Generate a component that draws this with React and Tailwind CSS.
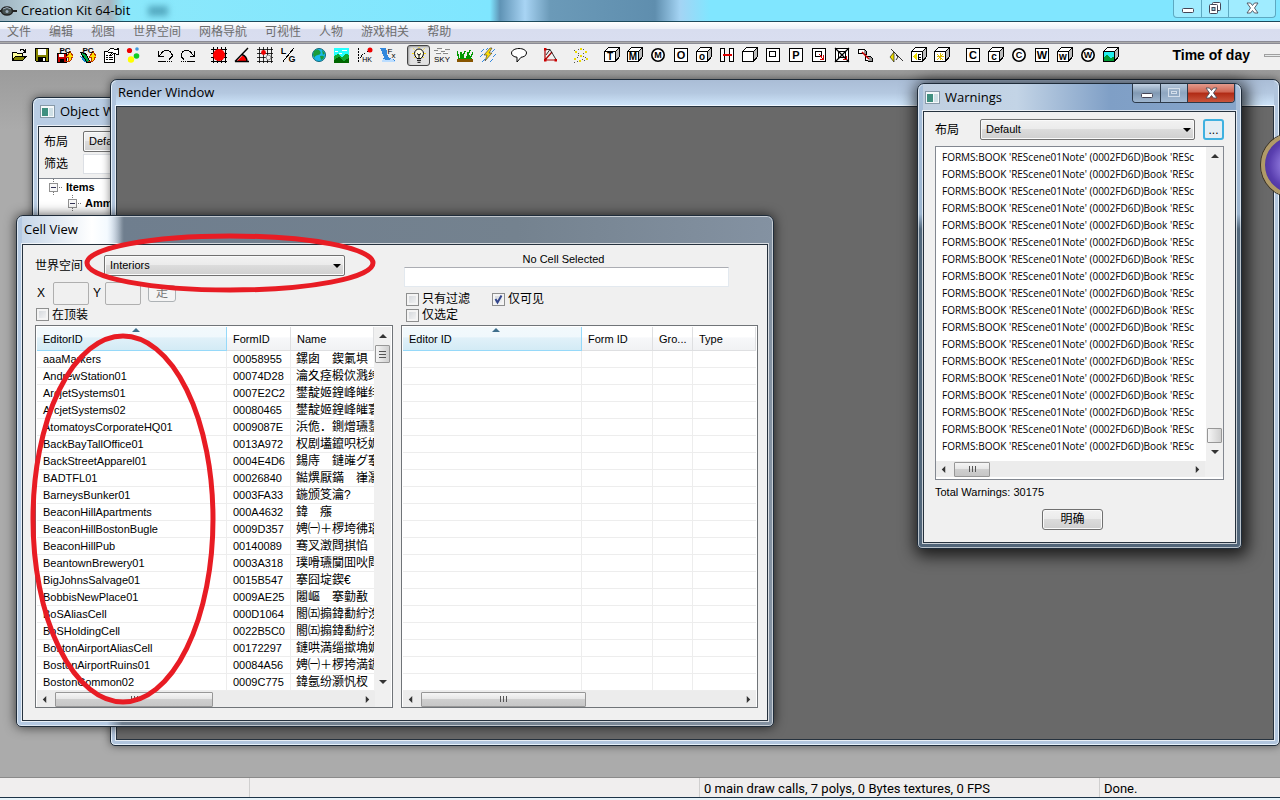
import { useState } from "react";

const MENUS = ["文件", "编辑", "视图", "世界空间", "网格导航", "可视性", "人物", "游戏相关", "帮助"];

const CELLS = [
  ["aaaMarkers", "00058955", "鏍囱　鍥氭埧"],
  ["AndrewStation01", "00074D28", "瀹夊痉椴佽溅绔"],
  ["ArcjetSystems01", "0007E2C2", "鐢靛姬鍠峰皠绯"],
  ["ArcjetSystems02", "00080465", "鐢靛姬鍠峰皠寰"],
  ["AtomatoysCorporateHQ01", "0009087E", "浜佹．鍘熷瓙鐜"],
  ["BackBayTallOffice01", "0013A972", "权剧壒鑹呮柉娓"],
  ["BackStreetApparel01", "0004E4D6", "鍚庤　鏈嶉グ搴"],
  ["BADTFL01", "00026840", "鐑熼厭鏋　嵂灏"],
  ["BarneysBunker01", "0003FA33", "鍦颁笅瀹?"],
  ["BeaconHillApartments", "000A4632", "鍏　瘬"],
  ["BeaconHillBostonBugle", "0009D357", "娉㈠＋椤垮彿瑙"],
  ["BeaconHillPub", "00140089", "骞叉澂閰掑惂"],
  ["BeantownBrewery01", "0003A318", "璞嗗瓙闃囬吙閰"],
  ["BigJohnsSalvage01", "0015B547", "搴囧埞鍥€"],
  ["BobbisNewPlace01", "0009AE25", "闂嶇　搴勭敾"],
  ["BoSAliasCell", "000D1064", "閽㈤搧鍏勫紵浼"],
  ["BoSHoldingCell", "0022B5C0", "閽㈤搧鍏勫紵浼"],
  ["BostonAirportAliasCell", "00172297", "鏈哄満缁撳埆娓"],
  ["BostonAirportRuins01", "00084A56", "娉㈠＋椤挎満鍦"],
  ["BostonCommon02", "0009C775", "鍏氬纷灏忛杈"],
];

const WARNINGS = Array.from({ length: 18 }, () => "FORMS:BOOK 'REScene01Note' (0002FD6D)Book 'RESc");

/* ---------- toolbar icons ---------- */

function Letter({ x, y, size = 10, children, bold = true }) {
  return (
    <text x={x} y={y} fontSize={size} fontWeight={bold ? 700 : 400} textAnchor="middle" fontFamily="Liberation Sans, sans-serif" fill="#000">
      {children}
    </text>
  );
}

function Cube({ letter, children }) {
  return (
    <>
      <path d="M.5 4.5l4-4h11v9l-4 5" fill="#fff" stroke="#000" />
      <path d="M11.5 4.5l4-4v9l-4 5z" fill="#bbb" stroke="#000" />
      <rect x=".5" y="4.5" width="11" height="10" fill="#fff" stroke="#000" />
      {letter && <Letter x={6} y={13} size={10}>{letter}</Letter>}
      {children}
    </>
  );
}

function Box({ letter, children }) {
  return (
    <>
      <rect x="1.5" y="1.5" width="13" height="13" fill="#fff" stroke="#000" />
      {letter && <Letter x={8} y={12} size={11}>{letter}</Letter>}
      {children}
    </>
  );
}

function Round({ letter, bold }) {
  return (
    <>
      <circle cx="8" cy="8" r="6.200" fill="#fff" stroke="#000" strokeWidth="1.600" shapeRendering="auto" />
      <Letter x={8} y={11} size={9} bold={bold}>{letter}</Letter>
    </>
  );
}

const ICONS = {
  open: (
    <>
      <path d="M1.5 13.5v-8h4l1 1h5v3" fill="#ffff9c" stroke="#000" />
      <path d="M1.5 13.5l3-4.500h11l-4 4.500z" fill="#848400" stroke="#000" />
      <path d="M9 3.500q2-2 4 0l1 1M14.500 2v3h-3" fill="none" stroke="#000" />
    </>
  ),
  save: (
    <>
      <path d="M1.500 1.500h13v13h-12l-1-1z" fill="#848400" stroke="#000" />
      <rect x="4" y="2" width="8" height="6" fill="#fff" />
      <rect x="4" y="10" width="8" height="5" fill="#000" />
      <rect x="9" y="11" width="2" height="3" fill="#fff" />
    </>
  ),
  pcSave: (
    <>
      <rect x=".5" y="6.500" width="9" height="9" fill="#c00" stroke="#000" />
      <rect x="2" y="7" width="5" height="3" fill="#fff" />
      <rect x="3" y="12" width="4" height="3" fill="#000" />
      <path d="M8 15c4 0 4-2 4-5H9.500L13 4l3.500 6H15c0 4-2 5-7 5z" fill="#fd0" stroke="#b30" />
      <Letter x={8} y={6} size={8}>PC</Letter>
    </>
  ),
  pcLand: (
    <>
      <path d="M.5 5.500l5 1 5 9H7z" fill="#0a4" stroke="#000" />
      <path d="M0 9l4 2 2 4H4z" fill="#18c" />
      <path d="M8 15c4 0 4-2 4-5H9.500L13 4l3.500 6H15c0 4-2 5-7 5z" fill="#fd0" stroke="#b30" />
      <Letter x={8} y={6} size={8}>PC</Letter>
    </>
  ),
  props: (
    <>
      <rect x="1.500" y="4.500" width="10" height="11" fill="#fff" stroke="#000" />
      <path d="M3 8.500h2M6 8.500h3M3 10.500h2M6 10.500h4M3 12.500h2M6 12.500h4" stroke="#000" />
      <path d="M4.500 4.500l3-3h3l1 1h3v-1h1v6h-2l-1-1h-2l-2 2-1-1 2-2H6z" fill="#fff" stroke="#000" />
    </>
  ),
  balls: (
    <g shapeRendering="auto">
      <circle cx="3.500" cy="3.500" r="2.600" fill="#e00" />
      <circle cx="11" cy="2" r="1.800" fill="#49d" />
      <circle cx="10.500" cy="9" r="2.800" fill="#1c2" />
      <circle cx="5" cy="12.500" r="3.200" fill="#ff0" />
    </g>
  ),
  undo: (
    <>
      <path d="M1.500 4v5h5M2 9l4-4.500q1-1 3-1h2q3 1 4 4v2l-3 3" fill="none" stroke="#000" />
      <path d="M1 14.500h8M10 14.500h1M12 14.500h1M14 14.500h1" stroke="#000" />
    </>
  ),
  redo: (
    <>
      <path d="M14.500 4v5h-5M14 9l-4-4.500q-1-1-3-1H5q-3 1-4 4v2l3 3" fill="none" stroke="#000" />
      <path d="M15 14.500H7M6 14.500H5M4 14.500H3M2 14.500H1" stroke="#000" />
    </>
  ),
  snapGrid: (
    <>
      <path d="M2.500 0v16M6.500 0v16M10.500 0v16M14.500 0v16M0 2.500h16M0 6.500h16M0 10.500h16M0 14.500h16" stroke="#000" />
      <circle cx="8" cy="8" r="6" fill="#f00" shapeRendering="auto" />
    </>
  ),
  angle: (
    <g shapeRendering="auto">
      <path d="M3 14l6-6q4 2 4 6z" fill="#f00" />
      <path d="M1 14.500h14M1 14.500L14 1M8 7.500q5 2 5 7" fill="none" stroke="#000" strokeWidth="1.400" />
    </g>
  ),
  gridRef: (
    <>
      <path d="M2.500 0v16M6.500 0v16M10.500 0v16M14.500 0v16M0 2.500h16M0 6.500h16M0 10.500h16M0 14.500h16" stroke="#000" strokeWidth=".8" />
      <circle cx="6.500" cy="5.500" r="2.400" fill="#e00" shapeRendering="auto" />
      <circle cx="11.500" cy="10.500" r="2.400" fill="#eee" stroke="#888" shapeRendering="auto" />
    </>
  ),
  lg: (
    <>
      <Letter x={3.500} y={7} size={9}>L</Letter>
      <Letter x={12} y={15} size={9}>G</Letter>
      <path d="M3 14.500L14 1" stroke="#000" />
    </>
  ),
  globe: (
    <g shapeRendering="auto">
      <circle cx="8" cy="8" r="6.500" fill="#18b8e8" stroke="#167" />
      <path d="M3 4q4-3 6 0t-2 4-3 3-2-3zM9 9q4-1 4 1t-3 3zM11 3l3 3-2 2z" fill="#1a9c3a" />
    </g>
  ),
  land: (
    <>
      <rect x="0" y="1" width="15" height="15" fill="#2ff" />
      <path d="M1 4h3M8 3h5M5 6h3" stroke="#fff" />
      <path d="M0 9l4-2 4 3 4-3 3 1v8H0z" fill="#1a3" />
      <path d="M0 13l5-3 5 4 5-3v5H0z" fill="#060" />
    </>
  ),
  hk: (
    <>
      <path d="M1.500 1v14" fill="none" stroke="#000" strokeDasharray="2 1" />
      <path d="M3 11l3-4 5-3" fill="none" stroke="#000" strokeDasharray="1 1" />
      <circle cx="13" cy="3" r="2.500" fill="#e00" shapeRendering="auto" />
      <Letter x={10} y={15} size={7} bold={false}>HK</Letter>
    </>
  ),
  fx: (
    <>
      <path d="M0 1h6l2 9 7 3v2H2l2-5z" fill="#38d" />
      <path d="M3 12l4 1 5-1 3 2v1H2z" fill="#bdf" />
      <Letter x={10} y={7} size={8} bold={false}>F</Letter>
      <Letter x={13.500} y={11} size={8} bold={false}>x</Letter>
    </>
  ),
  bulb: (
    <g shapeRendering="auto">
      <path d="M8 0v1M1 6.500h2M13 6.500h2M2.500 1.500l1 1M13.500 1.500l-1 1M3 11l1-1M13 11l-1-1" stroke="#fd0" />
      <path d="M6 11.500Q3.500 9 3.500 6.500a4.500 4.500 0 0 1 9 0Q12.500 9 10 11.500z" fill="#fffde8" stroke="#000" />
      <path d="M6 6.500l2 1.500 2-1.500M8 8v3M6 13.300h4M6.500 15.300h3" fill="none" stroke="#000" />
    </g>
  ),
  sky: (
    <>
      <path d="M0 3.500h4M3 1.500h5M7 4.500h4M11 2.500h5M2 6.500h5M9 6.500h5" stroke="#888" />
      <path d="M2 5.500h4M8 2.500h3M10 5.500h4" stroke="#fff" />
      <Letter x={8} y={15} size={8} bold={false}>SKY</Letter>
    </>
  ),
  grass: (
    <>
      <path d="M0 12h16v3H0z" fill="#850" />
      <path d="M2 12L0 4M4 12V6M5 12l3-8M7 12l-3-7M9 12l4-9M11 12V5M13 12l3-7M14 12l-3-5" stroke="#090" strokeWidth="1.400" />
    </>
  ),
  rain: (
    <g shapeRendering="auto">
      <path d="M1 5l3-3M0 10l3-3M2 15l3-3M12 5l3-3M13 10l3-3M10 15l3-3M6 3l2-2" stroke="#38d" />
      <path d="M10 1L4 8h3l-2 6 7-8H9l3-5z" fill="#fd0" stroke="#333" strokeWidth=".6" />
    </g>
  ),
  bubble: (
    <path d="M8 1.500c4 0 7.500 1.800 7.500 4.500S12.500 10 10 10.300L6 15v-4.800C3 10 .5 8.500 .5 6S4 1.500 8 1.500z" fill="#fff" stroke="#000" shapeRendering="auto" />
  ),
  navmesh: (
    <g shapeRendering="auto">
      <path d="M3 2v11h11M3 13l7-8" fill="none" stroke="#a00" strokeWidth="1.200" />
      <path d="M3 2.500h5l6 10M8 2.500L4 8" fill="none" stroke="#000" strokeWidth=".8" />
      <path d="M2 1h2.500v2.500H2zM2 12h2.500v2.500H2zM12.500 12H15v2.500h-2.500z" fill="#c00" />
    </g>
  ),
  stars: (
    <>
      <path d="M7 1h2v2H7zM2 4h2v2H2zM12 4h2v2h-2zM7 8h2v2H7zM1 11h2v2H1zM13 11h2v2h-2zM6 13h2v2H6z" fill="#ed0" />
      <path d="M5 2.500h1M10 2.500h1M1 3.500h1M5 6.500h1M10 6.500h1M5 8.500h1M10 9.500h1M4 10.500h1M4 14.500h1M11 13.500h1M12 10.500h1M1 15.500h1M9 12.500h1" stroke="#555" />
    </>
  ),
  cubeT: <Cube letter="T" />,
  cubeM: <Cube letter="M" />,
  roundM: <Round letter="M" bold />,
  boxO: <Box letter="O" />,
  cubeO: <Cube letter="o" />,
  portal: (
    <>
      <rect x="1.500" y="1.500" width="4" height="13" fill="#fff" stroke="#000" />
      <rect x="10.500" y="1.500" width="4" height="13" fill="#fff" stroke="#000" />
      <path d="M4 8h9" stroke="#d00" strokeWidth="2" />
    </>
  ),
  cube: <Cube />,
  boxInner: <Box><rect x="4.500" y="4.500" width="6" height="5" fill="#fff" stroke="#000" /></Box>,
  boxP: <Box letter="P" />,
  boxArrow: (
    <Box>
      <rect x="4.500" y="4.500" width="6" height="5" fill="#fff" stroke="#000" />
      <path d="M8 7l4 5M12.500 8v4.500H9" fill="none" stroke="#c00" />
    </Box>
  ),
  boxCross: (
    <Box>
      <rect x="4.500" y="4.500" width="7" height="6" fill="none" stroke="#000" />
      <path d="M1 1l14 14M15 1L1 15" stroke="#000" strokeWidth="1.300" shapeRendering="auto" />
      <path d="M9 12.500h3.500V9" fill="none" stroke="#c00" />
    </Box>
  ),
  link: (
    <>
      <path d="M1.500 2.500h6v4h-6zM8.500 9.500h5v4h-5z" fill="#fff" stroke="#000" />
      <path d="M7 2l2 2v3H7M13 9l2 2v3h-4" fill="#999" stroke="#000" />
      <path d="M5 5l7 7" stroke="#c00" strokeWidth="1.500" shapeRendering="auto" />
    </>
  ),
  soundLine: (
    <g shapeRendering="auto">
      <path d="M3 2l12 12" stroke="#000" strokeWidth=".8" />
      <path d="M6 5v10L2 10z" fill="#ed0" stroke="#000" strokeWidth=".6" />
      <path d="M8 8l2 2-2 3" fill="none" stroke="#000" strokeWidth=".8" />
    </g>
  ),
  cubeSound: <Cube><path d="M6 5v9L2 9.500z" fill="#ed0" /><path d="M7 7.500h3M7 10.500h3M7 12.500h3M7.500 7v6" stroke="#000" /></Cube>,
  cubeStar: <Cube><path d="M3 7l6 6M9 7l-6 6M6 6v7M2.500 9.500h7" stroke="#db0" /></Cube>,
  boxC: <Box letter="C" />,
  cubeC: <Cube letter="c" />,
  roundC: <Round letter="C" />,
  boxW: <Box letter="W" />,
  cubeW: <Cube letter="w" />,
  roundW: <Round letter="W" bold />,
  cubeLand: <Cube><rect x="1" y="5" width="10" height="9" fill="#2ee" /><path d="M1 10l3-2 3 3 4-1v4H1z" fill="#093" /></Cube>,
};

const TOOL_GROUPS = [
  ["open", "save", "pcSave", "pcLand", "props", "balls"],
  ["undo", "redo"],
  ["snapGrid", "angle", "gridRef", "lg"],
  ["globe", "land", "hk", "fx"],
  ["bulb", "sky", "grass", "rain"],
  ["bubble"],
  ["navmesh"],
  ["stars"],
  ["cubeT", "cubeM", "roundM", "boxO", "cubeO", "portal", "cube", "boxInner", "boxP", "boxArrow", "boxCross", "link"],
  ["soundLine", "cubeSound", "cubeStar"],
  ["boxC", "cubeC", "roundC", "boxW", "cubeW", "roundW", "cubeLand"],
];

function ToolButton({ name }) {
  const pressed = name === "bulb";
  return (
    <button
      aria-label={name}
      aria-pressed={pressed}
      className={`flex h-[21px] w-[23px] items-center justify-center ${pressed ? "rounded-[3px] border border-[#444] bg-[#e2e2e2] shadow-[inset_1px_1px_2px_#999]" : ""}`}
    >
      <svg width="16" height="16" viewBox="0 0 16 16" shapeRendering="crispEdges" className="shrink-0">
        {ICONS[name]}
      </svg>
    </button>
  );
}

/* ---------- shared controls ---------- */

function Triangle({ dir, className = "" }) {
  const paths = { up: "M0 5l4-4 4 4z", down: "M0 1l4 4 4-4z", left: "M6 0L2 4l4 4z", right: "M2 0l4 4-4 4z" };
  const tall = dir === "left" || dir === "right";
  return (
    <svg width={tall ? 7 : 8} height={tall ? 7 : 6} viewBox={tall ? "0 0 8 8" : "0 0 8 6"} className={className}>
      <path d={paths[dir]} fill="currentColor" />
    </svg>
  );
}

function Dropdown({ label, value, className = "" }) {
  return (
    <div className={`relative ${className}`}>
      <select
        aria-label={label}
        className="h-[21px] w-full appearance-none rounded-[2px] border border-[#707070] bg-[linear-gradient(#f2f2f2_0%,#ebebeb_48%,#dcdcdc_50%,#cfcfcf_100%)] pl-[5px] pr-5 text-[11px] leading-[19px] shadow-[inset_0_0_0_1px_#fafafa]"
      >
        <option>{value}</option>
      </select>
      <Triangle dir="down" className="pointer-events-none absolute right-1 top-2" />
    </div>
  );
}

function Check({ label, defaultChecked = false }) {
  const [checked, setChecked] = useState(defaultChecked);
  return (
    <label className="flex h-4 items-center gap-[3px] text-xs">
      <span className="relative block size-[13px]">
        <input
          type="checkbox"
          checked={checked}
          onChange={(e) => setChecked(e.target.checked)}
          className="block size-[13px] appearance-none border border-[#8e8f8f] bg-[linear-gradient(135deg,#cfd3d8,#f8f8f8)] shadow-[inset_0_0_0_2px_#f4f4f4]"
        />
        {checked && (
          <svg viewBox="0 0 13 13" className="pointer-events-none absolute inset-0">
            <path d="M3.500 6l2 3.500L9.500 2.500" fill="none" stroke="#33468c" strokeWidth="2" />
          </svg>
        )}
      </span>
      {label}
    </label>
  );
}

function Grip({ vertical }) {
  return (
    <svg width="9" height="9" viewBox="0 0 9 9" shapeRendering="crispEdges">
      <path d={vertical ? "M1 1.500h7M1 4.500h7M1 7.500h7" : "M1.500 1v6M4.500 1v6M7.500 1v6"} stroke="#555" />
    </svg>
  );
}

function HScroll({ thumb }) {
  return (
    <div className="flex h-4 flex-1 items-center justify-between bg-[#ececec] px-1 text-[#333]">
      <Triangle dir="left" />
      <div className="flex flex-1 px-[7px]">
        <div className={`flex h-[15px] items-center justify-center rounded-[1px] border border-[#979797] bg-[linear-gradient(#f5f5f5_0%,#e6e6e6_48%,#cfcfcf_50%,#c6c6c6_100%)] ${thumb}`}>
          <Grip />
        </div>
      </div>
      <Triangle dir="right" />
    </div>
  );
}

function VScroll({ children }) {
  return (
    <div className="flex w-[17px] shrink-0 flex-col items-center justify-between bg-[#f0f0f0] py-1.5 text-[#333]">
      <Triangle dir="up" />
      <div className="flex w-full flex-1 flex-col items-center py-1.5">{children}</div>
      <Triangle dir="down" />
    </div>
  );
}

function HeaderCell({ children, sorted, className = "" }) {
  const look = sorted
    ? "border-[#96d9f9] bg-[linear-gradient(#f2f9fc_0%,#f0f8fc_45%,#e1f1f9_46%,#d3ebf5_100%)]"
    : "border-[#dedfe1] bg-[linear-gradient(#fff_0%,#fff_45%,#f7f8fa_46%,#f1f2f4_100%)]";
  return (
    <th className={`relative h-6 border-b border-r px-1.5 pt-0.5 text-left font-normal ${look} ${className}`}>
      {sorted && <Triangle dir="up" className="absolute left-1/2 top-0 text-[#3f6f8c]" />}
      {children}
    </th>
  );
}

const CELL = "h-[17px] overflow-hidden whitespace-nowrap border-b border-r border-[#ededed] px-1.5 pt-px leading-[15px]";

function MdiWindow({ title, icon, className, titleClass = "", bodyClass = "", buttons, children }) {
  return (
    <section className={`absolute flex flex-col rounded-t-[7px] rounded-b-[5px] border border-[#1f2c3a] px-[5px] pb-[5px] ${className}`}>
      <header className={`flex shrink-0 items-center gap-1 px-0.5 text-[13px] ${titleClass}`}>
        {icon && (
          <svg width="16" height="14" viewBox="0 0 16 14">
            <rect x=".5" y=".5" width="14" height="12" fill="#f4f8fa" stroke="#8799a8" />
            <rect x="2" y="3" width="6" height="8" fill="#3f8f7f" />
            <rect x="9" y="3" width="4" height="8" fill="#cfe0e6" />
          </svg>
        )}
        <h2>{title}</h2>
        {buttons}
      </header>
      <div className={`min-h-0 flex-1 border border-[#26323e] outline outline-1 outline-white/70 ${bodyClass}`}>{children}</div>
    </section>
  );
}

/* ---------- windows ---------- */

function ObjectWindow() {
  return (
    <MdiWindow
      title="Object Window"
      icon
      className="left-8 top-[27px] h-[300px] w-[468px] bg-[#b9cde4] shadow-[0_0_8px_rgba(0,0,0,.5),inset_0_0_0_1px_#e8f2fb]"
      titleClass="h-7"
      bodyClass="bg-[#f0f0f0]"
    >
      <div className="flex flex-col gap-0.5 px-[5px] pt-1 text-xs">
        <div className="flex items-center gap-[15px]">
          <span>布局</span>
          <Dropdown label="布局" value="Default" className="w-48" />
        </div>
        <label className="flex items-center gap-[15px]">
          <span>筛选</span>
          <input className="h-5 w-48 border border-[#dcdfe4] bg-white" />
        </label>
      </div>
      <ul className="mt-1 h-[150px] border-t border-[#828790] bg-white pl-[9px] text-[11px] font-bold leading-4">
        <li className="flex items-center gap-1">
          <TreeMinus />
          Items
        </li>
        <li className="ml-[19px] flex items-center gap-1">
          <TreeMinus />
          Ammo
        </li>
      </ul>
    </MdiWindow>
  );
}

function TreeMinus() {
  return (
    <svg width="14" height="16" viewBox="0 0 14 16" shapeRendering="crispEdges">
      <path d="M5.500 0v3M5.500 13v3M11 8.500h3" stroke="#777" strokeDasharray="1 1" />
      <rect x="1.500" y="4.500" width="8" height="8" fill="#f8f8f8" stroke="#919191" />
      <path d="M3 8.500h5" stroke="#335" />
    </svg>
  );
}

function RenderWindow() {
  return (
    <MdiWindow
      title="Render Window"
      className="bottom-[31px] left-[110px] right-0 top-[9px] bg-[#b1c5dd] shadow-[0_0_8px_rgba(0,0,0,.5),inset_0_0_0_1px_#e8f2fb]"
      titleClass="h-[26px] bg-[linear-gradient(#aabdd6,#b4c8e0_50%,#cfe6fb)]"
      bodyClass="bg-[#696969]"
    />
  );
}

function CellList() {
  return (
    <div className="border border-[#707478] bg-white px-px pt-px text-[11px]">
      <div className="flex">
        <div className="min-w-0 flex-1 overflow-hidden">
          <table className="w-full table-fixed border-separate border-spacing-0">
            <thead>
              <tr>
                <HeaderCell sorted className="w-[190px]">EditorID</HeaderCell>
                <HeaderCell className="w-16">FormID</HeaderCell>
                <HeaderCell>Name</HeaderCell>
              </tr>
            </thead>
            <tbody>
              {CELLS.map(([editor, form, name]) => (
                <tr key={editor}>
                  <td className={CELL}>{editor}</td>
                  <td className={CELL}>{form}</td>
                  <td className="h-[17px] overflow-hidden whitespace-nowrap border-b border-[#ededed] pl-[5px] pt-px text-xs leading-[15px]">{name}</td>
                </tr>
              ))}
            </tbody>
          </table>
        </div>
        <VScroll>
          <div className="flex h-[18px] w-[15px] items-center justify-center rounded-[1px] border border-[#979797] bg-[linear-gradient(90deg,#f5f5f5,#cfcfcf)]">
            <Grip vertical />
          </div>
        </VScroll>
      </div>
      <div className="flex bg-[#f0f0f0] pr-4">
        <HScroll thumb="w-[158px]" />
      </div>
    </div>
  );
}

function ReferenceList() {
  return (
    <div className="border border-[#707478] bg-white px-px pt-px text-[11px]">
      <table className="w-full table-fixed border-separate border-spacing-0">
        <thead>
          <tr>
            <HeaderCell sorted className="w-[179px]">Editor ID</HeaderCell>
            <HeaderCell className="w-[71px]">Form ID</HeaderCell>
            <HeaderCell className="w-10">Gro...</HeaderCell>
            <HeaderCell>Type</HeaderCell>
          </tr>
        </thead>
        <tbody>
          {CELLS.map(([editor]) => (
            <tr key={editor}>
              <td className={CELL} />
              <td className={CELL} />
              <td className={CELL} />
              <td className="h-[17px] border-b border-[#ededed]" />
            </tr>
          ))}
        </tbody>
      </table>
      <div className="flex">
        <HScroll thumb="w-[165px]" />
      </div>
    </div>
  );
}

function CellView() {
  return (
    <MdiWindow
      title="Cell View"
      className="left-4 top-[145px] w-[758px] bg-[linear-gradient(90deg,#b4c9e2_0,#b4c9e2_90px,#6f7e8e_105px,#74828f_500px,#8492a2_758px)] shadow-[0_0_12px_rgba(0,0,0,.7),inset_0_0_0_1px_rgba(255,255,255,.55)]"
      titleClass="h-7 bg-[linear-gradient(90deg,#c6d6e8_0,#fff_70px,#f4faff_85px,transparent_102px)]"
      bodyClass="bg-[#f0f0f0]"
    >
      <div className="flex gap-2 pb-3 pl-3 pr-[9px] pt-1.5">
        <div className="flex w-[358px] flex-col">
          <div className="flex h-[30px] items-center pb-px text-xs">
            <span className="w-[69px]">世界空间</span>
            <Dropdown label="世界空间" value="Interiors" className="w-[241px]" />
          </div>
          <div className="flex h-6 items-center text-xs">
            <label className="flex items-center">
              <span className="w-[18px] pl-0.5">X</span>
              <input disabled className="h-[23px] w-9 rounded-[2px] border border-[#afafaf] bg-[#f0f0f0]" />
            </label>
            <label className="flex items-center">
              <span className="w-4 pl-1">Y</span>
              <input disabled className="h-[23px] w-9 rounded-[2px] border border-[#afafaf] bg-[#f0f0f0]" />
            </label>
            <button className="ml-[7px] flex h-[17px] w-7 items-center justify-center rounded-[3px] border border-[#adb2b5] bg-[#f4f4f4] text-[#777]">走</button>
          </div>
          <div className="flex h-5 items-center pb-px pl-px">
            <Check label="在顶装" />
          </div>
          <CellList />
        </div>
        <div className="flex min-w-0 flex-1 flex-col">
          <p className="pr-8 text-center text-[11px] leading-4">No Cell Selected</p>
          <input aria-label="filter" className="ml-[3px] h-5 w-[325px] border border-[#e3e9ef] border-t-[#abadb3] bg-white" />
          <div className="flex h-[38px] flex-col pl-[5px] pt-1">
            <div className="flex gap-[22px]">
              <Check label="只有过滤" />
              <Check label="仅可见" defaultChecked />
            </div>
            <Check label="仅选定" />
          </div>
          <ReferenceList />
        </div>
      </div>
      {/* hand-drawn marks over the worldspace box and the id column */}
      <svg viewBox="0 0 758 512" className="pointer-events-none absolute left-0 top-0 h-[512px] w-[758px] overflow-visible">
        <ellipse cx="213" cy="47" rx="143" ry="27" fill="none" stroke="#e81c24" strokeWidth="5" />
        <ellipse cx="106" cy="303" rx="90" ry="183" fill="none" stroke="#e81c24" strokeWidth="5" />
      </svg>
    </MdiWindow>
  );
}

function CaptionButtons() {
  return (
    <div className="-mr-px mb-2 ml-auto flex h-[19px] overflow-hidden rounded-b-[4px] border border-t-0 border-[#2c3a4a]">
      <button aria-label="Minimize" className="flex w-7 items-center justify-center border-r border-[#2c3a4a] bg-[linear-gradient(#c3d3e4,#8199b3_50%,#9fb6cf)]">
        <svg width="12" height="12" viewBox="0 0 12 12"><rect x=".5" y="6.500" width="11" height="4" rx="1" fill="#fff" stroke="#445" /></svg>
      </button>
      <button aria-label="Maximize" disabled className="flex w-[27px] items-center justify-center border-r border-[#2c3a4a] bg-[linear-gradient(#b5c7da,#8ea6c0_50%,#a3bad3)]">
        <svg width="12" height="10" viewBox="0 0 12 10"><rect x=".5" y=".5" width="11" height="8" fill="none" stroke="#d3deea" /><rect x="3.500" y="3.500" width="5" height="2" fill="none" stroke="#d3deea" /></svg>
      </button>
      <button aria-label="Close" className="flex w-[46px] items-center justify-center bg-[linear-gradient(#e39a8c_0%,#cf6552_45%,#b02a14_50%,#c9553c_100%)]">
        <CloseGlyph fill="#fff" />
      </button>
    </div>
  );
}

function CloseGlyph({ fill }) {
  return (
    <svg width="13" height="12" viewBox="0 0 13 12">
      <path d="M1 1h3.500l2 2.500 2-2.500H12L8.500 6l3.500 5H8.500l-2-2.500-2 2.500H1l3.500-5z" fill={fill} stroke="#4a4f5c" strokeWidth=".9" />
    </svg>
  );
}

function WarningsWindow() {
  return (
    <MdiWindow
      title="Warnings"
      icon
      className="right-[38px] top-[13px] w-[325px] bg-[linear-gradient(#a9c0db_0,#9db6d0_130px,#52687c_145px,#52667a_100%)] shadow-[2px_3px_16px_4px_rgba(0,0,0,.75),inset_0_0_0_1px_rgba(255,255,255,.6)]"
      titleClass="h-[27px] bg-[linear-gradient(90deg,#c0cfe0,#c3d4e6_30%,#7f9fc6_60%,#86a5ca)]"
      bodyClass="bg-[#f0f0f0]"
      buttons={<CaptionButtons />}
    >
      <div className="flex flex-col px-[11px] pb-3 pt-[7px]">
        <div className="flex items-center text-xs">
          <span className="w-[45px]">布局</span>
          <Dropdown label="布局" value="Default" className="flex-1" />
          <button className="ml-2 h-[21px] w-[21px] rounded-[3px] border-2 border-[#3fb1e0] bg-[#e4eef4] text-xs leading-3">...</button>
        </div>
        <div className="mt-1.5 border border-[#828790] bg-white pb-0.5">
          <div className="flex">
            <ul className="min-w-0 flex-1 overflow-hidden pb-1.5 pl-1.5 pt-0.5 font-['Open_Sans',sans-serif] text-[10px]">
              {WARNINGS.map((line, i) => (
                <li key={i} className="h-[17px] whitespace-nowrap leading-[17px]">{line}</li>
              ))}
            </ul>
            <VScroll>
              <div className="mt-auto h-[15px] w-[15px] rounded-[1px] border border-[#979797] bg-[linear-gradient(90deg,#f5f5f5,#cfcfcf)]" />
            </VScroll>
          </div>
          <div className="flex bg-[#f0f0f0] pr-[18px]">
            <HScroll thumb="w-9" />
          </div>
        </div>
        <p className="mt-1 text-[11px] leading-4">Total Warnings: 30175</p>
        <button className="mr-3.5 mt-[9px] h-[21px] w-[61px] self-center rounded-[3px] border border-[#707070] bg-[linear-gradient(#f2f2f2_0%,#ebebeb_48%,#dcdcdc_50%,#cfcfcf_100%)] text-xs leading-[19px] shadow-[inset_0_0_0_1px_#fafafa]">明确</button>
      </div>
    </MdiWindow>
  );
}

function TitleBar() {
  return (
    <header className="flex h-[22px] shrink-0 items-center border-b border-[#1d4a5c] bg-[linear-gradient(90deg,#9fb4c0_0,#c9e3ee_60px,#a7b6c0_110px,#8be8fb_125px,#7fe6ff_490px,#5f93b5_500px,#a8d4f4_525px,#6b9ab8_550px,#5f8eae_655px,#a4d4f4_680px,#80e6ff_710px)] text-[13px]">
      <svg width="17" height="14" viewBox="0 0 17 14" className="mr-1">
        <path d="M0 7h17" stroke="#222" strokeWidth="2" />
        <ellipse cx="7" cy="7" rx="5.500" ry="4" fill="#46504f" stroke="#222" strokeWidth="1.500" />
        <path d="M3 5q4-3 8 0" fill="none" stroke="#9ab" />
        <circle cx="7" cy="7.500" r="1.500" fill="#9ab" />
      </svg>
      <h1>Creation Kit 64-bit</h1>
      <span className="ml-[18px] h-2.5 w-5 bg-[#3d8ea6]/70 blur-[3px]" />
      <div className="mb-1 ml-auto mr-1 flex h-[18px] rounded-b-[4px] border border-t-0 border-[#5da9c2] bg-white/25">
        <button aria-label="Minimize" className="flex w-7 items-center justify-center border-r border-[#5da9c2]">
          <svg width="12" height="12" viewBox="0 0 12 12"><rect x=".5" y="6.500" width="11" height="4" rx="1" fill="#fff" stroke="#445" /></svg>
        </button>
        <button aria-label="Restore" className="flex w-[27px] items-center justify-center border-r border-[#5da9c2]">
          <svg width="12" height="12" viewBox="0 0 12 12">
            <rect x="3.500" y=".5" width="8" height="8" rx="1" fill="#fff" stroke="#445" />
            <rect x=".5" y="2.500" width="8" height="9" rx="1" fill="#fff" stroke="#445" />
            <rect x="3" y="5.500" width="3" height="3" fill="#8cd" stroke="#445" />
          </svg>
        </button>
        <button aria-label="Close" className="flex w-[46px] items-center justify-center">
          <CloseGlyph fill="#fff" />
        </button>
      </div>
    </header>
  );
}

export default function App() {
  return (
    <div className="flex h-screen flex-col overflow-hidden bg-[#ababab] font-['Liberation_Sans','Noto_Sans_CJK_SC',sans-serif] text-black [&_h1]:font-['Open_Sans'] [&_h2]:font-['Open_Sans']">
      <TitleBar />
      <nav className="flex h-5 shrink-0 items-center gap-[18px] border-b border-[#8b8b95] bg-[linear-gradient(#fff_0%,#eef1f8_35%,#d8ddef_40%,#d9def0_100%)] pl-[7px] text-xs text-[#6d6d6d]">
        {MENUS.map((m) => (
          <button key={m}>{m}</button>
        ))}
      </nav>
      <div className="mt-px flex h-[27px] shrink-0 items-center gap-2 border-t border-[#8b8b95] bg-[#f0f0f0] pb-1 pl-[7px]">
        {TOOL_GROUPS.map((group) => (
          <div key={group[0]} className="flex">
            {group.map((name) => (
              <ToolButton key={name} name={name} />
            ))}
          </div>
        ))}
        <label className="ml-auto flex items-center gap-3.5 whitespace-nowrap text-sm font-bold">
          Time of day
          <input type="range" className="h-[3px] w-4 appearance-none border border-r-0 border-[#a0a0a0] bg-[#e7eaea] [&::-webkit-slider-thumb]:appearance-none" />
        </label>
      </div>

      <main className="relative min-h-0 flex-1 overflow-hidden bg-[linear-gradient(#9c9c9c,#ababab_60px)]">
        <ObjectWindow />
        <RenderWindow />
        <CellView />
        <WarningsWindow />
        <div className="absolute -right-[45px] top-[63px] size-16 rounded-full border-4 border-[#b09a68] bg-[radial-gradient(circle,#b9a6ff,#5a3fb0_60%,#3b2a80)] shadow-[0_0_0_1px_#3c3220]" />
      </main>

      <footer className="flex h-5 shrink-0 items-center border-t border-[#8a8a8a] bg-[#f0eeee] font-['Roboto',sans-serif] text-[13px] leading-[22px]">
        <div className="h-full w-[250px] border-r border-[#d0cfcf]" />
        <div className="h-full w-[450px] border-r border-[#d0cfcf]" />
        <div className="h-full w-[400px] border-r border-[#d0cfcf] pl-1">0 main draw calls, 7 polys, 0 Bytes textures, 0 FPS</div>
        <div className="h-full flex-1 pl-1">Done.</div>
      </footer>
      <div className="h-[3px] shrink-0 border-t border-[#1d3347] bg-[#e8f4fa]" />
    </div>
  );
}
